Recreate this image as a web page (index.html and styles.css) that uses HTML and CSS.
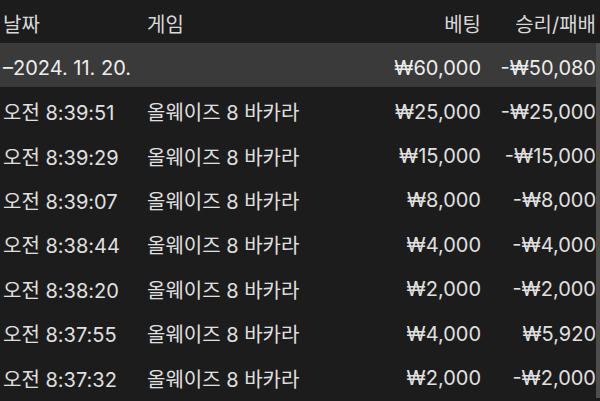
FILE: index.html
```html
<!DOCTYPE html>
<html lang="ko">
<head>
<meta charset="utf-8">
<link rel="stylesheet" href="styles.css">
</head>
<body>
<div class="screen">
  <div class="row head">
    <div class="c-date">날짜</div>
    <div class="c-game">게임</div>
    <div class="c-bet">베팅</div>
    <div class="c-res">승리/패배</div>
  </div>
  <div class="body">
    <div class="list">
      <div class="row group">
        <div class="c-date">–2024. 11. 20.</div>
        <div class="c-game"></div>
        <div class="c-bet">₩60,000</div>
        <div class="c-res">-₩50,080</div>
      </div>
      <div class="row">
        <div class="c-date">오전 8:39:51</div>
        <div class="c-game">올웨이즈 8 바카라</div>
        <div class="c-bet">₩25,000</div>
        <div class="c-res">-₩25,000</div>
      </div>
      <div class="row">
        <div class="c-date">오전 8:39:29</div>
        <div class="c-game">올웨이즈 8 바카라</div>
        <div class="c-bet">₩15,000</div>
        <div class="c-res">-₩15,000</div>
      </div>
      <div class="row">
        <div class="c-date">오전 8:39:07</div>
        <div class="c-game">올웨이즈 8 바카라</div>
        <div class="c-bet">₩8,000</div>
        <div class="c-res">-₩8,000</div>
      </div>
      <div class="row">
        <div class="c-date">오전 8:38:44</div>
        <div class="c-game">올웨이즈 8 바카라</div>
        <div class="c-bet">₩4,000</div>
        <div class="c-res">-₩4,000</div>
      </div>
      <div class="row">
        <div class="c-date">오전 8:38:20</div>
        <div class="c-game">올웨이즈 8 바카라</div>
        <div class="c-bet">₩2,000</div>
        <div class="c-res">-₩2,000</div>
      </div>
      <div class="row">
        <div class="c-date">오전 8:37:55</div>
        <div class="c-game">올웨이즈 8 바카라</div>
        <div class="c-bet">₩4,000</div>
        <div class="c-res">₩5,920</div>
      </div>
      <div class="row">
        <div class="c-date">오전 8:37:32</div>
        <div class="c-game">올웨이즈 8 바카라</div>
        <div class="c-bet">₩2,000</div>
        <div class="c-res">-₩2,000</div>
      </div>
    </div>
    <div class="scrollbar"></div>
  </div>
</div>
</body>
</html>
```
FILE: styles.css
```css
html, body {
  margin: 0;
  padding: 0;
  background: #1c1c1c;
}
.screen {
  width: 600px;
  height: 401px;
  overflow: hidden;
  background: #1c1c1c;
  color: #e0e0e0;
  font-family: "Inter", "Noto Sans CJK KR", sans-serif;
  font-size: 20px;
}
.row {
  display: grid;
  grid-template-columns: 144px 1fr 120px 115px;
  align-items: center;
  height: 44.4px;
  padding-left: 3px;
  width: 596px;
  box-sizing: border-box;
  white-space: nowrap;
}
.row > div {
  padding-top: 5px;
}
.head {
  height: 43px;
  color: #d8d8d8;
}
.head > div {
  padding-top: 3px;
}
.group {
  background: #3a3a3a;
  height: 44px;
  color: #ededed;
}
.c-bet, .c-res {
  text-align: right;
}
.body {
  display: flex;
}
.list {
  width: 596px;
}
.scrollbar {
  width: 4px;
  background: #4e4e4e;
}
```
